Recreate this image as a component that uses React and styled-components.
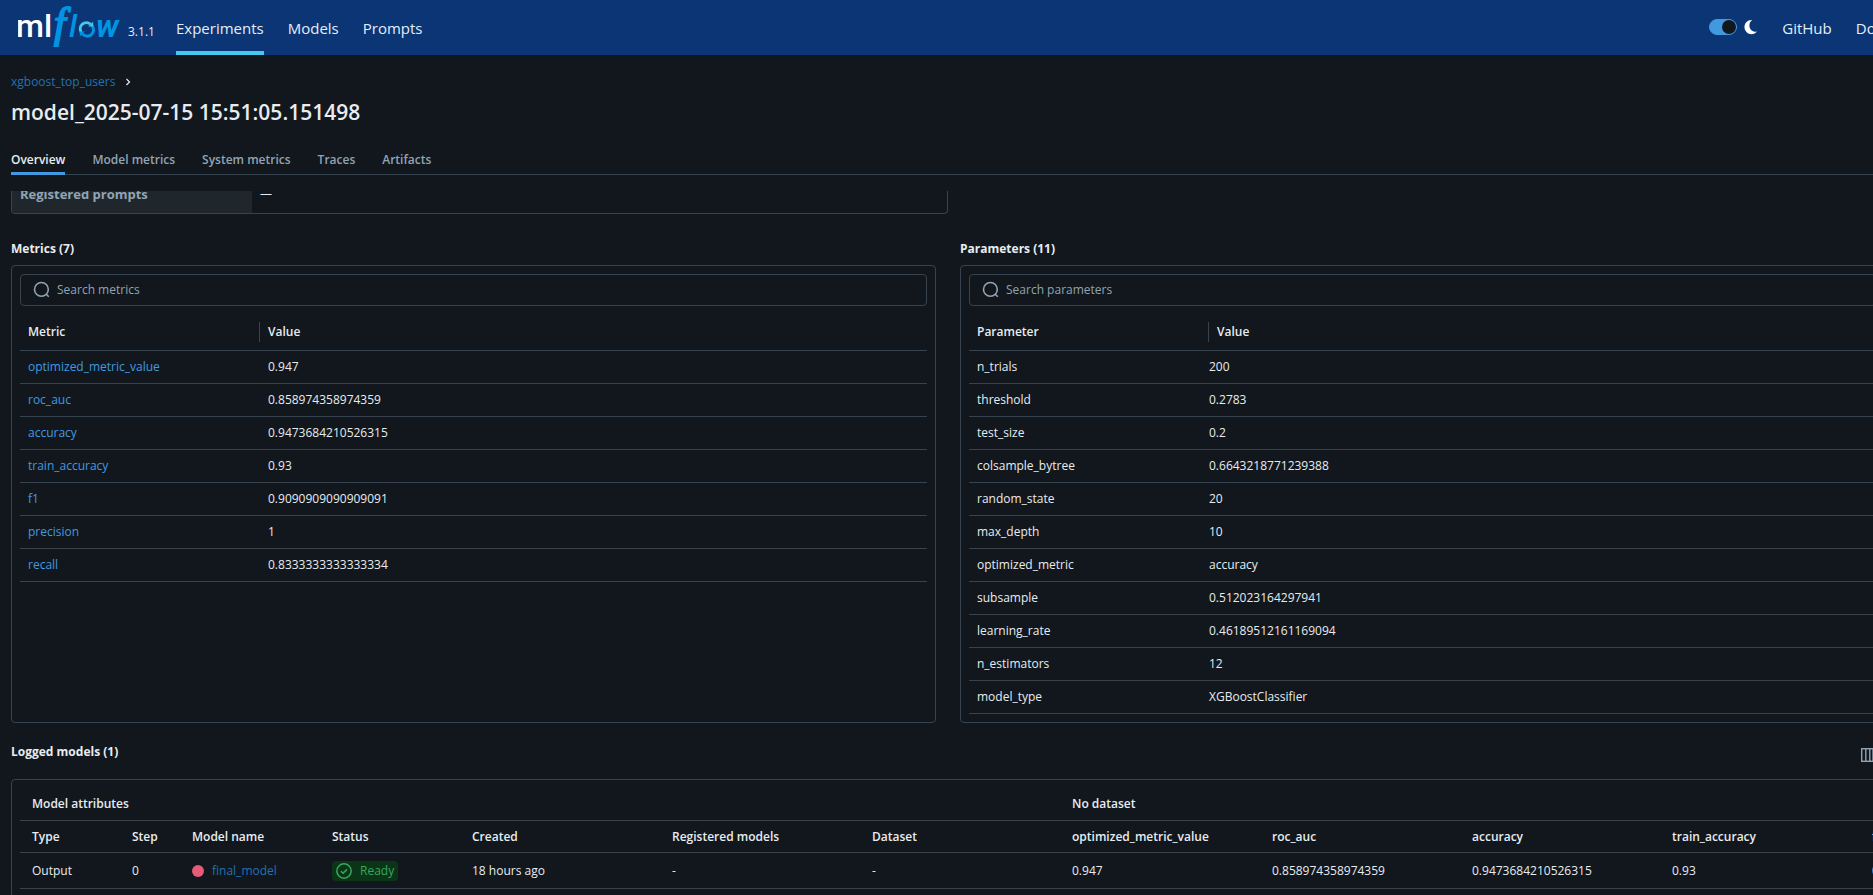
import React from "react";
import styled, { createGlobalStyle, css } from "styled-components";

const color = {
  bg: "#11171c",
  nav: "#0b3574",
  cyan: "#43c9ed",
  accent: "#4299e0",
  link: "#2272b4",
  metricLink: "#4299e0",
  border: "#37444f",
  text: "#e8ecf0",
  muted: "#92a4b3",
  shade: "#1f272d",
};

const GlobalStyle = createGlobalStyle`
  *, *::before, *::after { box-sizing: border-box; }
  html, body { margin: 0; background: ${color.bg}; overflow: hidden; }
  body, button, input, table {
    font-family: "Open Sans", "Noto Sans", sans-serif;
    font-size: 12px;
    line-height: 20px;
    color: ${color.text};
  }
  a { text-decoration: none; }
`;

const Page = styled.div`
  display: flex;
  flex-direction: column;
  width: calc(100% + 23px);
  height: 100vh;
  overflow: hidden;
`;

/* ---------- top bar ---------- */

const TopBar = styled.header`
  display: flex;
  flex: none;
  height: 55px;
  padding: 0 6px 0 18px;
  background: ${color.nav};
`;

const Brand = styled.a`
  display: flex;
  align-items: center;
  gap: 2px;
  width: 158px;
  color: #fff;
`;

const Version = styled.span`
  padding-top: 9px;
  font-size: 12px;
  color: #e4eef8;
`;

const TopNav = styled.nav`
  display: flex;
  flex: 1;
  gap: 24px;
`;

const TopLink = styled.a`
  display: flex;
  align-items: center;
  border-bottom: 4px solid ${(p) => (p.$active ? color.cyan : "transparent")};
  padding-top: 4px;
  font-size: 15px;
  color: #e4eef8;
`;

const TopActions = styled.div`
  display: flex;
  gap: 24px;
`;

const ThemeToggle = styled.label`
  display: flex;
  align-items: center;
  gap: 7px;
  padding-bottom: 1px;
`;

const Switch = styled.input`
  appearance: none;
  display: flex;
  justify-content: flex-end;
  width: 28px;
  height: 16px;
  margin: 0;
  border: 1px solid ${color.accent};
  border-radius: 8px;
  background: ${color.accent};
  &::before {
    content: "";
    width: 14px;
    height: 14px;
    border-radius: 50%;
    background: ${color.bg};
  }
`;

function Logo() {
  return (
    <svg width="108" height="54" viewBox="0 -4 108 54" role="img" aria-label="mlflow">
      <g fontFamily="Roboto, sans-serif" fontWeight="500" fontSize="32">
        <text x="-2" y="32" fill="#fff">m</text>
        <text x="26" y="32" fill="#fff">l</text>
        <text x="51" y="32" fontStyle="italic" fill="#0194e2">l</text>
        <text x="78" y="32" fontStyle="italic" fontWeight="700" fill="#0194e2">w</text>
      </g>
      <text
        x="36"
        y="32"
        fontFamily="Liberation Serif, serif"
        fontStyle="italic"
        fontSize="42"
        fill="#0194e2"
        stroke="#0194e2"
        strokeWidth="1.8"
      >
        f
      </text>
      <g fill="none" strokeWidth="3">
        <path d="M63.200 27.200A6.200 6.200 0 0 1 72.500 19.200" stroke="#43c9ed" />
        <path d="M74.100 20.800A6.200 6.200 0 0 1 64.500 28.900" stroke="#0194e2" />
      </g>
      <path d="M75.200 16.600v5h-5z" fill="#43c9ed" />
      <path d="M61.800 31.600v-5h5z" fill="#0194e2" />
    </svg>
  );
}

function MoonIcon() {
  return (
    <svg width="14" height="16" viewBox="0 0 14 16" aria-hidden="true">
      <path
        d="M8.200 1A7.100 7.100 0 1 0 13 12.600c-4.600.5-7.600-2.400-7.600-6.200C5.400 4.200 6.500 2.200 8.200 1z"
        fill="#fff"
      />
    </svg>
  );
}

/* ---------- run heading ---------- */

const RunHeader = styled.div`
  display: flex;
  flex-direction: column;
  flex: none;
  padding: 17px 11px 0;
`;

const Crumbs = styled.nav`
  display: flex;
  align-items: center;
  gap: 10px;
  color: ${color.text};
`;

const TextLink = styled.a`
  color: ${(p) => (p.$bright ? color.metricLink : color.link)};
`;

const Title = styled.h1`
  margin: 7px 0 25px;
  font-size: 21px;
  line-height: 26px;
  font-weight: 600;
`;

const Tabs = styled.div`
  display: flex;
  gap: 27px;
  box-shadow: inset 0 -1px ${color.border};
`;

const Tab = styled.button`
  padding: 0 0 2px;
  border: 0;
  border-bottom: 3px solid ${(p) => (p.$active ? color.accent : "transparent")};
  background: none;
  font-weight: 600;
  color: ${(p) => (p.$active ? color.text : color.muted)};
`;

/* ---------- scrolled content ---------- */

const Content = styled.main`
  flex: 1;
  min-height: 0;
  margin-top: 16px;
  padding: 0 11px;
  overflow: hidden;
`;

const Details = styled.table`
  width: 50%;
  margin-top: -16px;
  border: 1px solid ${color.border};
  border-top: 0;
  border-radius: 4px;
  border-spacing: 0;
  table-layout: fixed;
  overflow: hidden;
  th, td {
    height: 38px;
    padding: 0 8px;
    text-align: left;
  }
  th {
    width: 240px;
    background: ${color.shade};
    color: ${color.muted};
    font-size: 13px;
    font-weight: 700;
  }
`;

const Split = styled.div`
  display: grid;
  grid-template-columns: 1fr 1fr;
  gap: 24px;
  margin-top: 25px;
`;

const Section = styled.section`
  display: flex;
  flex-direction: column;
  gap: 6px;
`;

const Heading = styled.h2`
  margin: 0;
  font-size: 12px;
  line-height: 20px;
  font-weight: 700;
`;

const Panel = styled.div`
  flex: 1;
  padding: 8px;
  border: 1px solid ${color.border};
  border-radius: 4px;
  overflow: hidden;
`;

const SearchBox = styled.label`
  display: flex;
  align-items: center;
  gap: 6px;
  height: 32px;
  padding: 0 12px;
  border: 1px solid ${color.border};
  border-radius: 4px;
`;

const SearchInput = styled.input`
  flex: 1;
  padding: 0;
  border: 0;
  outline: 0;
  background: none;
  &::placeholder {
    color: ${color.muted};
    opacity: 1;
  }
`;

const cellBase = css`
  border-bottom: 1px solid ${color.border};
  text-align: left;
  white-space: nowrap;
`;

const KeyTable = styled.table`
  width: 100%;
  border-spacing: 0;
  table-layout: fixed;
  th {
    ${cellBase}
    padding: 16px 8px 8px;
    font-weight: 600;
  }
  th:first-child {
    width: 240px;
    padding-right: 0;
  }
  td {
    ${cellBase}
    padding: 6px 8px;
  }
  td:last-child {
    padding-left: ${(p) => (p.$flush ? 0 : 8)}px;
  }
`;

const Divided = styled.div`
  border-right: 1px solid ${color.border};
`;

function SearchIcon() {
  return (
    <svg width="18" height="18" viewBox="0 0 18 18" fill="none" stroke={color.muted} strokeWidth="1.600" aria-hidden="true">
      <circle cx="8.400" cy="8.400" r="6.900" />
      <path d="M13 13l2.800 2.800" />
    </svg>
  );
}

function KeyValuePanel({ title, label, placeholder, rows, linked }) {
  return (
    <Section>
      <Heading>{title}</Heading>
      <Panel>
        <SearchBox>
          <SearchIcon />
          <SearchInput type="text" placeholder={placeholder} aria-label={placeholder} />
        </SearchBox>
        <KeyTable $flush={!linked}>
          <thead>
            <tr>
              <th scope="col"><Divided>{label}</Divided></th>
              <th scope="col">Value</th>
            </tr>
          </thead>
          <tbody>
            {rows.map(([name, value]) => (
              <tr key={name}>
                <td>{linked ? <TextLink $bright href={`#${name}`}>{name}</TextLink> : name}</td>
                <td>{value}</td>
              </tr>
            ))}
          </tbody>
        </KeyTable>
      </Panel>
    </Section>
  );
}

/* ---------- logged models ---------- */

const ModelsBar = styled.div`
  display: flex;
  justify-content: space-between;
  margin: 16px 0 8px;
  ${Heading} {
    padding-top: 3px;
  }
`;

const IconButton = styled.button`
  display: flex;
  align-items: center;
  justify-content: center;
  width: 32px;
  height: 32px;
  padding: 0;
  border: 0;
  background: none;
  color: ${color.muted};
`;

const ModelsTable = styled.table`
  width: max-content;
  border-spacing: 0;
  table-layout: fixed;
  th, td {
    ${cellBase}
    height: 36px;
    padding: 0 12px;
  }
  th {
    height: 32px;
    font-weight: 600;
  }
  thead tr:first-child th {
    height: 33px;
  }
`;

const Col = styled.col`
  width: ${(p) => p.$w}px;
`;

const ModelName = styled.span`
  display: flex;
  align-items: center;
  gap: 8px;
`;

const Dot = styled.span`
  width: 12px;
  height: 12px;
  border-radius: 50%;
  background: #e65b77;
`;

const StatusTag = styled.span`
  display: inline-flex;
  align-items: center;
  gap: 8px;
  height: 20px;
  padding: 0 4px;
  border-radius: 4px;
  background: #0b3517;
  color: #3ba65e;
  vertical-align: middle;
`;

function ColumnsIcon() {
  return (
    <svg width="16" height="16" viewBox="0 0 16 16" fill="none" stroke="currentColor" strokeWidth="1.400" aria-hidden="true">
      <rect x="0.700" y="1.700" width="14.600" height="12.600" />
      <path d="M4.800 1v14M8.800 1v14M12 1v14" />
    </svg>
  );
}

function CheckIcon() {
  return (
    <svg width="16" height="16" viewBox="0 0 16 16" fill="none" stroke="currentColor" strokeWidth="1.500" aria-hidden="true">
      <circle cx="8" cy="8" r="7.200" />
      <path d="M5 8.200l2.100 2.100L11 6.400" />
    </svg>
  );
}

const metrics = [
  ["optimized_metric_value", "0.947"],
  ["roc_auc", "0.858974358974359"],
  ["accuracy", "0.9473684210526315"],
  ["train_accuracy", "0.93"],
  ["f1", "0.9090909090909091"],
  ["precision", "1"],
  ["recall", "0.8333333333333334"],
];

const parameters = [
  ["n_trials", "200"],
  ["threshold", "0.2783"],
  ["test_size", "0.2"],
  ["colsample_bytree", "0.6643218771239388"],
  ["random_state", "20"],
  ["max_depth", "10"],
  ["optimized_metric", "accuracy"],
  ["subsample", "0.512023164297941"],
  ["learning_rate", "0.46189512161169094"],
  ["n_estimators", "12"],
  ["model_type", "XGBoostClassifier"],
];

const attributes = ["Type", "Step", "Model name", "Status", "Created", "Registered models", "Dataset"];
const shownMetrics = metrics.slice(0, 5);
const columnWidths = [100, 60, 140, 140, 200, 200, 200, ...shownMetrics.map(() => 200)];

export default function App() {
  return (
    <>
      <GlobalStyle />
      <Page>
        <TopBar>
          <Brand href="#home">
            <Logo />
            <Version>3.1.1</Version>
          </Brand>
          <TopNav>
            <TopLink href="#experiments" $active>Experiments</TopLink>
            <TopLink href="#models">Models</TopLink>
            <TopLink href="#prompts">Prompts</TopLink>
          </TopNav>
          <TopActions>
            <ThemeToggle>
              <Switch type="checkbox" role="switch" defaultChecked aria-label="Dark mode" />
              <MoonIcon />
            </ThemeToggle>
            <TopLink href="#github">GitHub</TopLink>
            <TopLink href="#docs">Docs</TopLink>
          </TopActions>
        </TopBar>

        <RunHeader>
          <Crumbs aria-label="Breadcrumb">
            <TextLink href="#experiment">xgboost_top_users</TextLink>
            <svg width="6" height="8" viewBox="0 0 6 8" fill="none" stroke="currentColor" strokeWidth="1.200" aria-hidden="true">
              <path d="M1.500 1l3 3-3 3" />
            </svg>
          </Crumbs>
          <Title>model_2025-07-15 15:51:05.151498</Title>
          <Tabs role="tablist">
            {["Overview", "Model metrics", "System metrics", "Traces", "Artifacts"].map((name, i) => (
              <Tab key={name} type="button" role="tab" aria-selected={i === 0} $active={i === 0}>
                {name}
              </Tab>
            ))}
          </Tabs>
        </RunHeader>

        <Content>
          <Details>
            <tbody>
              <tr>
                <th scope="row">Registered prompts</th>
                <td>—</td>
              </tr>
            </tbody>
          </Details>

          <Split>
            <KeyValuePanel title="Metrics (7)" label="Metric" placeholder="Search metrics" rows={metrics} linked />
            <KeyValuePanel title="Parameters (11)" label="Parameter" placeholder="Search parameters" rows={parameters} />
          </Split>

          <ModelsBar>
            <Heading>Logged models (1)</Heading>
            <IconButton type="button" aria-label="Columns">
              <ColumnsIcon />
            </IconButton>
          </ModelsBar>
          <Panel>
            <ModelsTable>
              <colgroup>
                {columnWidths.map((w, i) => <Col key={i} $w={w} />)}
              </colgroup>
              <thead>
                <tr>
                  <th colSpan={attributes.length}>Model attributes</th>
                  <th colSpan={shownMetrics.length}>No dataset</th>
                </tr>
                <tr>
                  {attributes.map((name) => <th key={name} scope="col">{name}</th>)}
                  {shownMetrics.map(([name]) => <th key={name} scope="col">{name}</th>)}
                </tr>
              </thead>
              <tbody>
                <tr>
                  <td>Output</td>
                  <td>0</td>
                  <td>
                    <ModelName>
                      <Dot />
                      <TextLink href="#final_model">final_model</TextLink>
                    </ModelName>
                  </td>
                  <td>
                    <StatusTag><CheckIcon />Ready</StatusTag>
                  </td>
                  <td>18 hours ago</td>
                  <td>-</td>
                  <td>-</td>
                  {shownMetrics.map(([name, value]) => <td key={name}>{value}</td>)}
                </tr>
              </tbody>
            </ModelsTable>
          </Panel>
        </Content>
      </Page>
    </>
  );
}
